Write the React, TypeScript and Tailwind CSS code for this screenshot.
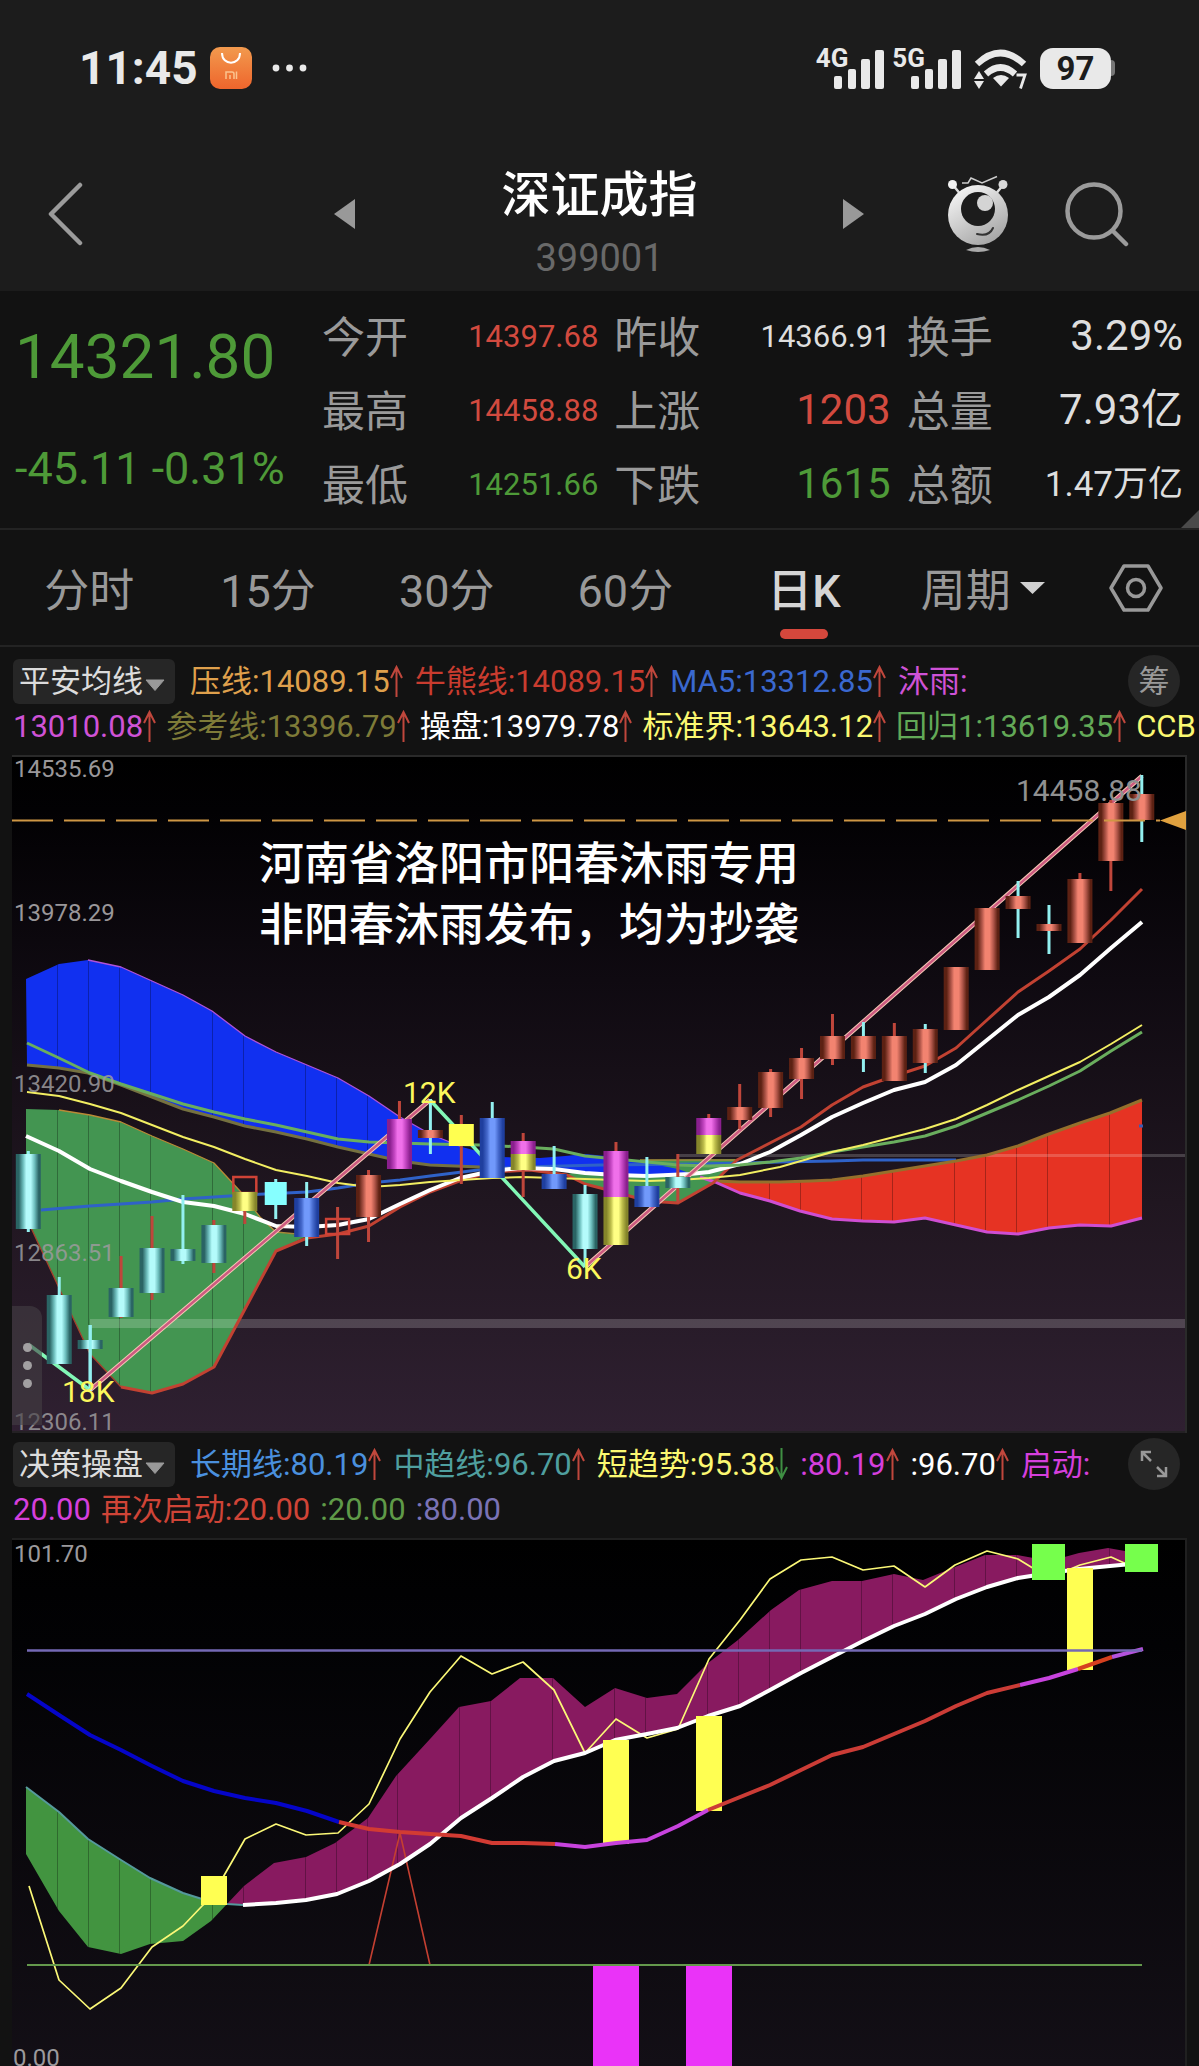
import type { ReactNode } from "react";

type Pt = [number, number];

const STEP = 30.93;
const X0 = 28.3;
const cx = (i: number) => X0 + STEP * i;
const pts = (list: Pt[]) => list.map((p) => p.join(",")).join(" ");

/* ---------- status bar ---------- */

function Signal({ label }: { label: string }) {
  return (
    <div className="flex h-[46px] items-start">
      <span className="text-[26px] leading-[26px] font-bold">{label}</span>
      <svg className="-ml-[14px] h-[46px] w-[50px]" viewBox="0 0 50 46" fill="currentColor" aria-hidden="true">
        <rect x="0" y="31" width="8" height="13" rx="2" />
        <rect x="14" y="24" width="8" height="20" rx="2" />
        <rect x="27" y="14" width="9" height="30" rx="2" />
        <rect x="41" y="5" width="9" height="39" rx="2" />
      </svg>
    </div>
  );
}

function StatusBar() {
  return (
    <div className="flex h-[136px] items-center justify-between pr-[84px] pl-[79px] text-[#e9e9e9]">
      <div className="flex items-center">
        <span className="text-[46px] leading-none font-bold">11:45</span>
        <svg className="ml-3 h-[42px] w-[42px]" viewBox="0 0 42 42" aria-label="Mi Store">
          <defs>
            <linearGradient id="mi" x1="0" y1="0" x2="0" y2="1">
              <stop offset="0" stopColor="#f29a4e" />
              <stop offset="1" stopColor="#ee652c" />
            </linearGradient>
          </defs>
          <rect width="42" height="42" rx="10" fill="url(#mi)" />
          <path d="M12 6c0 13 18 13 18 0" fill="none" stroke="#fff" strokeWidth="2" />
          <path d="M16 32v-7h6q2 0 2 2v5M20 28v4M26.500 24.500v7.500" fill="none" stroke="#fbc48f" strokeWidth="1.500" />
        </svg>
        <svg className="ml-5 h-2 w-9" viewBox="0 0 36 8" fill="currentColor" aria-hidden="true">
          <circle cx="4" cy="4" r="3.400" />
          <circle cx="17.500" cy="4" r="3.400" />
          <circle cx="31" cy="4" r="3.400" />
        </svg>
      </div>
      <div className="flex items-center">
        <Signal label="4G" />
        <div className="w-2" />
        <Signal label="5G" />
        <svg className="ml-3 h-[42px] w-[55px]" viewBox="0 0 55 42" fill="none" aria-label="Wi-Fi">
          <path d="M4 17Q27.500-5 51 17" stroke="currentColor" strokeWidth="6.500" />
          <path d="M13 27Q27.500 14 42 27" stroke="currentColor" strokeWidth="6.500" />
          <path d="M20 31Q28 25 36 31L28 39.500z" fill="currentColor" />
          <path d="M6 24l5 8H1zM6 42l5-8H1z" fill="currentColor" />
          <path d="M43.500 28H52L47.500 41.500" stroke="currentColor" strokeWidth="2.800" />
        </svg>
        <div className="ml-3 flex items-center">
          <span className="flex h-[41px] w-[71px] items-center justify-center rounded-[13px] bg-[#e9e9e9] text-[33px] leading-none font-bold text-[#1c1c1c]">
            97
          </span>
          <span className="h-4 w-1 rounded-r bg-[#777]" />
        </div>
      </div>
    </div>
  );
}

/* ---------- title bar ---------- */

function TitleBar() {
  return (
    <div className="grid h-[155px] grid-cols-[1fr_auto_1fr] items-center">
      <div className="flex items-center justify-between pl-[46px]">
        <button type="button" aria-label="返回">
          <svg className="h-[66px] w-[37px]" viewBox="0 0 37 66" fill="none" stroke="#9b9b9b" strokeWidth="4.500" strokeLinecap="round" strokeLinejoin="round">
            <path d="M34 4L5 33L34 62" />
          </svg>
        </button>
        <button type="button" aria-label="上一只">
          <svg className="h-[30px] w-[22px]" viewBox="0 0 22 30" fill="#999">
            <path d="M0 15L21 0V30z" />
          </svg>
        </button>
      </div>
      <div className="flex w-[487px] flex-col items-center pt-6">
        <h1 className="text-[49px] leading-[64px] font-medium text-white">深证成指</h1>
        <p className="text-[38px] leading-[60px] text-[#696969]">399001</p>
      </div>
      <div className="flex items-center">
        <button type="button" aria-label="下一只">
          <svg className="h-[30px] w-[22px]" viewBox="0 0 22 30" fill="#999">
            <path d="M21 15L0 0V30z" />
          </svg>
        </button>
        <button type="button" aria-label="智能助手" className="ml-[82px]">
          <svg className="h-[78px] w-[62px]" viewBox="0 0 62 78">
            <defs>
              <linearGradient id="bot" x1="0" y1="0" x2="0.600" y2="1">
                <stop offset="0" stopColor="#fff" />
                <stop offset="0.550" stopColor="#cfcfcf" />
                <stop offset="1" stopColor="#a8a8a8" />
              </linearGradient>
            </defs>
            <path d="M6 10L14 20M56 10L48 20" stroke="#ddd" strokeWidth="2.500" />
            <circle cx="5.500" cy="9.500" r="4.500" fill="#f2f2f2" />
            <circle cx="56" cy="9.500" r="4.500" fill="#d9d9d9" />
            <path d="M15 8h6l3-5 11 5L50 1.500" fill="none" stroke="#ccc" strokeWidth="1.500" />
            <circle cx="31" cy="40" r="30" fill="url(#bot)" />
            <circle cx="31" cy="34" r="17" fill="#1c1c1c" />
            <circle cx="38" cy="28" r="8" fill="#d4d4d4" />
            <path d="M30 59q12 3 16-6" fill="none" stroke="#333" strokeWidth="2" strokeLinecap="round" />
            <path d="M19 75q12-6 24 0q-12 4-24 0z" fill="#aaa" />
          </svg>
        </button>
        <button type="button" aria-label="搜索" className="ml-[56px]">
          <svg className="h-[66px] w-[64px]" viewBox="0 0 64 66" fill="none" stroke="#9b9b9b" strokeWidth="4.500" strokeLinecap="round">
            <circle cx="29" cy="30" r="26.500" />
            <path d="M48 50L61 63" />
          </svg>
        </button>
      </div>
    </div>
  );
}

/* ---------- quote ---------- */

type Quote = { label: string; value: string; tone: string };

const RED = "text-[#d24a3f]";
const GREEN = "text-[#4e9a38]";
const PLAIN = "text-[#dedede]";

const QUOTES: Quote[] = [
  { label: "今开", value: "14397.68", tone: `text-[31px] ${RED}` },
  { label: "昨收", value: "14366.91", tone: `text-[31px] ${PLAIN}` },
  { label: "换手", value: "3.29%", tone: `text-[42px] ${PLAIN}` },
  { label: "最高", value: "14458.88", tone: `text-[31px] ${RED}` },
  { label: "上涨", value: "1203", tone: `text-[42px] ${RED}` },
  { label: "总量", value: "7.93亿", tone: `text-[42px] ${PLAIN}` },
  { label: "最低", value: "14251.66", tone: `text-[31px] ${GREEN}` },
  { label: "下跌", value: "1615", tone: `text-[42px] ${GREEN}` },
  { label: "总额", value: "1.47万亿", tone: `text-[35px] ${PLAIN}` },
];

function QuotePanel() {
  return (
    <section className="relative flex h-[239px] border-b-2 border-[#232323] pr-4">
      <div className={`w-[322px] shrink-0 pl-[15px] whitespace-nowrap ${GREEN}`}>
        <p className="mt-[20px] text-[62px] leading-[92px]">14321.80</p>
        <p className="mt-[36px] text-[45px] leading-[60px]">-45.11 -0.31%</p>
      </div>
      <dl className="mt-[8px] grid h-[222px] flex-1 grid-cols-3 grid-rows-3 gap-x-4 whitespace-nowrap">
        {QUOTES.map((q) => (
          <div key={q.label} className="flex items-center justify-between leading-none">
            <dt className="pt-1 text-[43px] text-[#9a9a9a]">{q.label}</dt>
            <dd className={q.tone}>{q.value}</dd>
          </div>
        ))}
      </dl>
      <svg className="absolute right-0 bottom-0 h-[18px] w-[18px]" viewBox="0 0 18 18" fill="#4a4a4a" aria-hidden="true">
        <path d="M18 0V18H0z" />
      </svg>
    </section>
  );
}

/* ---------- period tabs ---------- */

function Tabs() {
  return (
    <nav className="flex h-[117px] items-stretch border-b-2 border-[#232323] text-[45px] leading-none text-[#999]">
      {["分时", "15分", "30分", "60分", "日K"].map((t) => (
        <button
          key={t}
          type="button"
          aria-pressed={t === "日K"}
          className={
            t === "日K"
              ? "relative flex flex-1 items-center justify-center pt-2 font-medium text-[#d5d5d5]"
              : "relative flex flex-1 items-center justify-center pt-2"
          }
        >
          {t}
          {t === "日K" && <span className="absolute bottom-[6px] h-[10px] w-12 rounded-full bg-[#d5473c]" />}
        </button>
      ))}
      <label className="flex flex-1 items-center justify-center gap-2">
        <select aria-label="周期" className="appearance-none bg-transparent pt-2 leading-[60px] outline-none">
          <option>周期</option>
        </select>
        <svg className="pointer-events-none h-3 w-[25px]" viewBox="0 0 25 12" fill="#d0d0d0" aria-hidden="true">
          <path d="M0 0H25L12.500 12z" />
        </svg>
      </label>
      <button type="button" aria-label="设置" className="flex w-[127px] items-center justify-center">
        <svg className="h-[50px] w-[54px]" viewBox="0 0 54 50" fill="none" stroke="#999" strokeWidth="3.500" strokeLinejoin="round">
          <path d="M15 3H39L52 25L39 47H15L2 25z" />
          <circle cx="27" cy="25" r="8.500" />
        </svg>
      </button>
    </nav>
  );
}

/* ---------- indicator legends ---------- */

type Item = { text: string; color: string; dir?: "up" | "down" };

function Arrow({ dir }: { dir: "up" | "down" }) {
  return dir === "up" ? (
    <svg className="h-[32px] w-[13px] shrink-0" viewBox="0 0 13 32" fill="none" stroke="#c0473c" strokeWidth="2" aria-label="上升">
      <path d="M6.500 32V2M1 13L6.500 2L12 13" />
    </svg>
  ) : (
    <svg className="h-[32px] w-[13px] shrink-0" viewBox="0 0 13 32" fill="none" stroke="#3f8f43" strokeWidth="2" aria-label="下降">
      <path d="M6.500 0V30M1 19L6.500 30L12 19" />
    </svg>
  );
}

function Items({ items }: { items: Item[] }) {
  return (
    <>
      {items.map((it) => (
        <span key={it.text} className={`flex shrink-0 items-center whitespace-nowrap ${it.color}`}>
          {it.text}
          {it.dir && <Arrow dir={it.dir} />}
        </span>
      ))}
    </>
  );
}

function Legend({ name, first, second, action }: { name: string; first: Item[]; second: Item[]; action: ReactNode }) {
  return (
    <div className="text-[31px] leading-[45px]">
      <div className="flex h-[46px] items-center gap-3 pr-[19px] pl-[13px]">
        <label className="mr-[3px] flex h-[45px] w-[162px] shrink-0 items-center gap-[2px] rounded-md bg-[#262626] pl-[6px]">
          <select aria-label="指标" className="appearance-none bg-transparent text-[#dcdcdc] outline-none">
            <option>{name}</option>
          </select>
          <svg className="pointer-events-none mt-2 h-3 w-5" viewBox="0 0 20 12" fill="#999" stroke="#999" strokeLinejoin="round" aria-hidden="true">
            <path d="M1 1H19L10 11.500z" />
          </svg>
        </label>
        <Items items={first} />
        <div className="ml-auto">{action}</div>
      </div>
      <div className="flex h-[44px] items-center gap-[10px] overflow-hidden pl-[13px]">
        <Items items={second} />
      </div>
    </div>
  );
}

const ROUND = "flex h-[52px] w-[52px] items-center justify-center rounded-full bg-[#262626] text-[#999]";

/* ---------- candlestick chart ---------- */

const OLIVE: Pt[] = [
  [27, 1065], [59, 1068], [88, 1073], [121, 1085], [152, 1097], [183, 1109], [214, 1117], [245, 1126], [276, 1132],
  [307, 1139], [338, 1147], [369, 1154], [400, 1161], [430, 1165], [480, 1167],
];
const OLIVE_R: Pt[] = [
  [715, 1181], [740, 1182], [780, 1182], [811, 1181], [832, 1180], [863, 1176], [894, 1171], [925, 1166], [956, 1161],
  [987, 1155], [1018, 1146], [1049, 1134], [1080, 1123], [1110, 1113], [1142, 1100],
];
const BLUE_TOP: Pt[] = [
  [26, 979], [59, 964], [88, 960], [121, 967], [152, 981], [183, 995], [212, 1011], [245, 1036], [276, 1052],
  [307, 1065], [338, 1078], [369, 1096], [400, 1117], [430, 1134], [462, 1147], [500, 1157], [540, 1158], [565, 1156],
  [585, 1154], [616, 1157], [647, 1163], [678, 1169], [692, 1174],
];
const BLUE_AREA: Pt[] = [...BLUE_TOP, [650, 1175], [600, 1174], [540, 1168], ...[...OLIVE].reverse()];
const GREEN_AREA: Pt[] = [
  [26, 1109], [59, 1110], [90, 1115], [121, 1122], [152, 1136], [183, 1149], [214, 1163], [240, 1191], [260, 1217],
  [276, 1232], [307, 1236], [276, 1251], [245, 1309], [214, 1367], [183, 1384], [152, 1393], [121, 1387], [90, 1354],
  [59, 1288], [32, 1230], [26, 1217],
];
const GREEN_AREA2: Pt[] = [
  [567, 1174], [585, 1184], [616, 1192], [647, 1201], [678, 1202], [713, 1183], [737, 1159], [640, 1160],
];
const PURPLE_LOW: Pt[] = [
  [700, 1177], [715, 1182], [740, 1193], [770, 1201], [800, 1211], [832, 1219], [863, 1221], [894, 1222], [925, 1218],
  [956, 1225], [987, 1232], [1018, 1234], [1049, 1228], [1080, 1225], [1111, 1226], [1142, 1218],
];
const RED_AREA: Pt[] = [...OLIVE_R, ...[...PURPLE_LOW].reverse()];
const RED_LINE: Pt[] = [
  [121, 1387], [152, 1393], [183, 1384], [214, 1367], [245, 1309], [276, 1251], [307, 1238], [338, 1234], [369, 1226],
  [400, 1207], [430, 1192], [462, 1180], [492, 1172], [530, 1170], [567, 1175], [585, 1184], [616, 1192], [647, 1201],
  [678, 1203], [713, 1183], [737, 1160], [770, 1143], [801, 1127], [832, 1105], [863, 1087], [894, 1076], [925, 1066],
  [956, 1048], [987, 1020], [1018, 992], [1049, 971], [1080, 949], [1111, 920], [1142, 889],
];
const WHITE_LINE: Pt[] = [
  [26, 1136], [59, 1151], [90, 1169], [121, 1181], [152, 1192], [183, 1202], [214, 1206], [245, 1214], [276, 1226],
  [307, 1227], [338, 1225], [369, 1219], [400, 1204], [430, 1190], [460, 1178], [492, 1171], [520, 1168], [554, 1169],
  [585, 1173], [616, 1175], [647, 1176], [690, 1174], [709, 1172], [740, 1164], [770, 1152], [801, 1135], [832, 1117],
  [863, 1103], [894, 1090], [925, 1082], [956, 1065], [987, 1040], [1018, 1015], [1049, 997], [1080, 975],
  [1111, 948], [1142, 922],
];
const GREEN_LINE: Pt[] = [
  [27, 1043], [59, 1058], [90, 1073], [121, 1084], [152, 1094], [183, 1104], [214, 1112], [245, 1119], [276, 1125],
  [307, 1132], [338, 1139], [369, 1142], [400, 1143], [430, 1144], [480, 1145], [523, 1147], [554, 1149], [585, 1156],
  [616, 1159], [647, 1162], [678, 1165], [709, 1166], [740, 1165], [770, 1162], [801, 1158], [832, 1152],
  [863, 1147], [894, 1142], [925, 1136], [956, 1126], [987, 1113], [1018, 1100], [1049, 1086], [1080, 1071],
  [1111, 1051], [1142, 1032],
];
const YELLOW_LINE: Pt[] = [
  [27, 1092], [59, 1096], [90, 1104], [121, 1113], [152, 1125], [183, 1137], [214, 1147], [245, 1159], [276, 1170],
  [307, 1176], [338, 1183], [369, 1187], [400, 1185], [430, 1182], [461, 1180], [492, 1178], [523, 1177], [554, 1178],
  [616, 1180], [647, 1181], [678, 1180], [709, 1178], [740, 1175], [780, 1167], [832, 1152], [863, 1145], [894, 1137],
  [925, 1129], [956, 1119], [987, 1105], [1018, 1090], [1049, 1076], [1080, 1062], [1111, 1044], [1142, 1025],
];
const BLUE_LINE: Pt[] = [
  [41, 1210], [90, 1206], [152, 1202], [183, 1199], [245, 1195], [307, 1192], [338, 1188], [369, 1183], [400, 1180],
  [430, 1176], [478, 1170], [523, 1167], [600, 1165], [700, 1164], [780, 1162], [832, 1161], [863, 1160], [956, 1160],
];

type Fill = "teal" | "salmon" | "blue" | "magenta" | "yellow" | "flatYellow" | "cyan" | "hollow";
type Body = [Fill, number, number];
type Candle = { i: number; wick?: ["c" | "r", number, number]; bodies: Body[] };

const CANDLES: Candle[] = [
  { i: 0, wick: ["c", 1151, 1232], bodies: [["teal", 1154, 1229]] },
  { i: 1, wick: ["c", 1277, 1364], bodies: [["teal", 1295, 1364]] },
  { i: 2, wick: ["c", 1325, 1391], bodies: [["teal", 1340, 1349]] },
  { i: 3, wick: ["r", 1256, 1318], bodies: [["teal", 1288, 1317]] },
  { i: 4, wick: ["r", 1216, 1300], bodies: [["teal", 1248, 1293]] },
  { i: 5, wick: ["c", 1195, 1264], bodies: [["teal", 1249, 1261]] },
  { i: 6, wick: ["r", 1220, 1273], bodies: [["teal", 1225, 1263]] },
  { i: 7, wick: ["r", 1211, 1224], bodies: [["hollow", 1176, 1194], ["yellow", 1192, 1211]] },
  { i: 8, wick: ["c", 1179, 1219], bodies: [["cyan", 1182, 1205]] },
  { i: 9, wick: ["c", 1182, 1246], bodies: [["blue", 1198, 1237]] },
  { i: 10, wick: ["r", 1207, 1259], bodies: [["hollow", 1218, 1235]] },
  { i: 11, wick: ["r", 1170, 1242], bodies: [["salmon", 1175, 1217]] },
  { i: 12, wick: ["r", 1101, 1130], bodies: [["magenta", 1119, 1169]] },
  { i: 13, wick: ["c", 1099, 1154], bodies: [["salmon", 1130, 1138]] },
  { i: 14, wick: ["r", 1115, 1184], bodies: [["flatYellow", 1124, 1146]] },
  { i: 15, wick: ["c", 1102, 1120], bodies: [["blue", 1118, 1178]] },
  { i: 16, wick: ["r", 1133, 1197], bodies: [["magenta", 1141, 1154], ["yellow", 1154, 1170]] },
  { i: 17, wick: ["c", 1146, 1175], bodies: [["blue", 1174, 1189]] },
  { i: 18, wick: ["c", 1185, 1267], bodies: [["teal", 1194, 1249]] },
  { i: 19, wick: ["r", 1142, 1155], bodies: [["magenta", 1151, 1197], ["yellow", 1197, 1245]] },
  { i: 20, wick: ["c", 1157, 1190], bodies: [["blue", 1186, 1207]] },
  { i: 21, wick: ["r", 1154, 1203], bodies: [["teal", 1177, 1188]] },
  { i: 22, wick: ["r", 1114, 1120], bodies: [["magenta", 1118, 1135], ["yellow", 1135, 1154]] },
  { i: 23, wick: ["r", 1084, 1129], bodies: [["salmon", 1107, 1120]] },
  { i: 24, wick: ["r", 1069, 1117], bodies: [["salmon", 1072, 1108]] },
  { i: 25, wick: ["r", 1048, 1099], bodies: [["salmon", 1058, 1079]] },
  { i: 26, wick: ["r", 1014, 1065], bodies: [["salmon", 1036, 1059]] },
  { i: 27, wick: ["c", 1022, 1072], bodies: [["salmon", 1036, 1059]] },
  { i: 28, wick: ["r", 1023, 1040], bodies: [["salmon", 1036, 1081]] },
  { i: 29, wick: ["c", 1024, 1073], bodies: [["salmon", 1029, 1063]] },
  { i: 30, bodies: [["salmon", 967, 1030]] },
  { i: 31, bodies: [["salmon", 908, 970]] },
  { i: 32, wick: ["c", 881, 938], bodies: [["salmon", 896, 909]] },
  { i: 33, wick: ["c", 905, 954], bodies: [["salmon", 924, 931]] },
  { i: 34, wick: ["r", 873, 885], bodies: [["salmon", 879, 943]] },
  { i: 35, wick: ["r", 800, 891], bodies: [["salmon", 803, 861]] },
  { i: 36, wick: ["c", 775, 842], bodies: [["salmon", 794, 820]] },
];

const SHADES: { id: string; edge: string; mid: string; core: string }[] = [
  { id: "teal", edge: "#2a6464", mid: "#6fc0bf", core: "#b4fbfb" },
  { id: "salmon", edge: "#5c2113", mid: "#b2574a", core: "#f28370" },
  { id: "blue", edge: "#1f3f9f", mid: "#4569cc", core: "#7199fb" },
  { id: "magenta", edge: "#8a1f8e", mid: "#c446c2", core: "#f070ea" },
  { id: "yellow", edge: "#85852a", mid: "#bfbf4c", core: "#ffff84" },
];

const FLAT: Record<string, string> = { flatYellow: "#ffff50", cyan: "#86ffff" };

function CandleMark({ c }: { c: Candle }) {
  const x = cx(c.i);
  return (
    <g>
      {c.wick && (
        <rect x={x - 1.5} y={c.wick[1]} width="3" height={c.wick[2] - c.wick[1]} fill={c.wick[0] === "c" ? "#93f0f0" : "#bf463b"} />
      )}
      {c.bodies.map(([fill, top, bottom]) => {
        if (fill === "hollow") {
          return (
            <rect key={top} x={x - 11.5} y={top + 1} width="23" height={bottom - top - 2} fill="none" stroke="#cf4337" strokeWidth="2.500" />
          );
        }
        const w = fill === "cyan" ? 22 : 25;
        return (
          <rect key={top} x={x - w / 2} y={top} width={w} height={bottom - top} fill={FLAT[fill] ?? `url(#c-${fill})`} />
        );
      })}
      {c.i === 2 && <rect x={x - 1.5} y={1325} width="3" height="66" fill="#93f0f0" />}
    </g>
  );
}

function Stripes({ clip, at, y1, y2 }: { clip: string; at: number[]; y1: number; y2: number }) {
  return (
    <g clipPath={`url(#${clip})`} stroke="#000" strokeOpacity="0.280">
      {at.map((i) => (
        <path key={i} d={`M${Math.round(cx(i)) - 2 + 0.5} ${y1}V${y2}`} />
      ))}
    </g>
  );
}

function CandleChart() {
  return (
    <div className="relative mx-3 border-t-2 border-r-2 border-[#2a2a2a]">
      <svg className="block w-full overflow-visible" viewBox="12 757 1173 676" role="img" aria-label="日K线图">
        <defs>
          <linearGradient id="bg1" x1="0" y1="0" x2="0" y2="1">
            <stop offset="0" stopColor="#000" />
            <stop offset="0.080" stopColor="#020103" />
            <stop offset="0.330" stopColor="#0f0a11" />
            <stop offset="0.660" stopColor="#201620" />
            <stop offset="1" stopColor="#2f2031" />
          </linearGradient>
          {SHADES.map((s) => (
            <linearGradient key={s.id} id={`c-${s.id}`}>
              <stop offset="0" stopColor={s.edge} />
              <stop offset="0.120" stopColor={s.edge} />
              <stop offset="0.300" stopColor={s.mid} />
              <stop offset="0.420" stopColor={s.core} />
              <stop offset="0.600" stopColor={s.core} />
              <stop offset="0.750" stopColor={s.mid} />
              <stop offset="0.920" stopColor={s.edge} />
            </linearGradient>
          ))}
          <clipPath id="k-blue"><polygon points={pts(BLUE_AREA)} /></clipPath>
          <clipPath id="k-green"><polygon points={pts(GREEN_AREA)} /></clipPath>
          <clipPath id="k-red"><polygon points={pts(RED_AREA)} /></clipPath>
        </defs>
        <rect x="12" y="757" width="1173" height="674" fill="url(#bg1)" />
        <rect x="12" y="1431" width="1173" height="2" fill="#242124" />

        <g fontSize="24" fill="#9a979a">
          <text x="14" y="777">14535.69</text>
          <text x="14" y="921">13978.29</text>
        </g>

        <polygon points={pts(GREEN_AREA)} fill="#439551" />
        <polygon points={pts(GREEN_AREA2)} fill="#439551" />
        <polygon points={pts(BLUE_AREA)} fill="#1130f0" />
        <polygon points={pts(RED_AREA)} fill="#e63323" />
        <Stripes clip="k-blue" at={[1, 2, 3, 4, 6, 7, 9, 10, 11]} y1={950} y2={1180} />
        <Stripes clip="k-green" at={[1, 2, 3, 4, 6, 7]} y1={1100} y2={1400} />
        <Stripes clip="k-red" at={[24, 25, 27, 28, 30, 31, 32, 33, 35]} y1={1090} y2={1240} />

        <rect x="90" y="1319" width="1095" height="9" fill="#fff" fillOpacity="0.190" />
        <rect x="678" y="1154" width="507" height="3" fill="#fff" fillOpacity="0.190" />

        <g fill="none" strokeLinejoin="round">
          <polyline points={pts(BLUE_TOP.slice(2, 15))} stroke="#b052d8" strokeWidth="1.300" />
          <polyline points={pts(GREEN_AREA.slice(1, 10))} stroke="#b98a36" strokeWidth="1.300" />
          <path d="M276 1232L307 1235M640 1160H735" stroke="#a58b38" strokeWidth="1.500" />
          <polyline points={pts(GREEN_AREA.slice(16))} stroke="#a5402c" strokeWidth="1.300" />
          <polyline points={pts(BLUE_LINE)} stroke="#2f62c8" strokeWidth="3" />
          <path d="M1139 1126H1143" stroke="#3a5bb5" strokeWidth="3" />
          <polyline points={pts(OLIVE)} stroke="#757140" strokeWidth="3" />
          <polyline points={pts(OLIVE_R)} stroke="#95702c" strokeWidth="3" />
          <polyline points={pts(PURPLE_LOW)} stroke="#cf4ed2" strokeWidth="3" />
          <polyline points={pts(RED_LINE)} stroke="#c24232" strokeWidth="3" />
          <polyline points={pts(WHITE_LINE)} stroke="#fff" strokeWidth="4" />
          <polyline points={pts(GREEN_LINE)} stroke="#6aae5e" strokeWidth="3" />
          <polyline points={pts(YELLOW_LINE)} stroke="#f2ee62" strokeWidth="2" />
          <path d="M28 1344L90 1390M430 1100L585 1267" stroke="#82f7b6" strokeWidth="3.500" />
          <path d="M90 1390L430 1100M585 1267L1142 776" stroke="#f6c8b4" strokeWidth="4.500" />
          <path d="M90 1390L430 1100M585 1267L1142 776" stroke="#cc5a80" strokeWidth="2.500" />
        </g>

        {CANDLES.map((c) => <CandleMark key={c.i} c={c} />)}

        <path d="M12 820.500H1160" stroke="#cf9745" strokeWidth="2" strokeDasharray="41 11" />
        <path d="M1160 820.500L1186 811V830z" fill="#e0a13f" />

        <g fontSize="24" fill="#9d9b9e" fillOpacity="0.850">
          <text x="14" y="1092">13420.90</text>
          <text x="14" y="1261">12863.51</text>
          <text x="14" y="1430">12306.11</text>
        </g>
        <text x="1016" y="801" fontSize="30" fill="#909090">14458.88</text>
        <g fontSize="30" fill="#fbf75c">
          <text x="62" y="1402">18K</text>
          <text x="403" y="1103">12K</text>
          <text x="566" y="1279">6K</text>
        </g>
        <g fontSize="45" fontWeight="500" fill="#fff">
          <text x="259" y="880">河南省洛阳市阳春沐雨专用</text>
          <text x="259" y="941">非阳春沐雨发布，均为抄袭</text>
        </g>
      </svg>
      <button
        type="button"
        aria-label="更多"
        className="absolute bottom-2 left-0 flex h-[119px] w-[30px] flex-col items-center justify-center gap-[9px] rounded-tr-xl bg-[#454045]/60"
      >
        <span className="h-[9px] w-[9px] rounded-full bg-[#a2a0a2]" />
        <span className="h-[9px] w-[9px] rounded-full bg-[#a2a0a2]" />
        <span className="h-[9px] w-[9px] rounded-full bg-[#a2a0a2]" />
      </button>
    </div>
  );
}

/* ---------- oscillator chart ---------- */

const OSC_GREEN_TOP: Pt[] = [[26, 1787], [59, 1812], [88, 1839], [121, 1860], [150, 1878], [183, 1893], [202, 1899], [227, 1904]];
const OSC_GREEN: Pt[] = [
  ...OSC_GREEN_TOP, [211, 1921], [183, 1941], [150, 1944], [121, 1954], [88, 1947], [59, 1911], [26, 1854],
];
const OSC_WHITE: Pt[] = [
  [243, 1905], [276, 1903], [306, 1900], [337, 1894], [369, 1881], [400, 1864], [430, 1844], [461, 1818], [492, 1798],
  [523, 1777], [554, 1761], [585, 1753], [615, 1740], [647, 1734], [677, 1728], [708, 1716], [740, 1706],
  [770, 1690], [801, 1673], [832, 1657], [863, 1641], [894, 1626], [925, 1614], [956, 1599], [987, 1587],
  [1018, 1578], [1050, 1573], [1079, 1569], [1110, 1566], [1142, 1563],
];
const OSC_TOP: Pt[] = [
  [227, 1904], [244, 1886], [274, 1863], [306, 1857], [335, 1843], [368, 1818], [396, 1776], [430, 1739], [459, 1707],
  [491, 1701], [520, 1678], [553, 1678], [585, 1707], [615, 1688], [647, 1698], [677, 1694], [708, 1663], [738, 1640],
  [771, 1610], [799, 1590], [832, 1581], [862, 1581], [894, 1574], [923, 1580], [955, 1567], [985, 1555],
  [1017, 1555], [1050, 1561], [1079, 1553], [1108, 1548], [1142, 1554],
];
const OSC_AREA: Pt[] = [...OSC_TOP, ...[...OSC_WHITE].reverse()];
const OSC_YELLOW: Pt[] = [
  [29, 1886], [59, 1980], [90, 2009], [121, 1988], [152, 1947], [183, 1926], [203, 1905], [214, 1895], [222, 1879],
  [245, 1839], [276, 1824], [306, 1835], [338, 1833], [369, 1804], [400, 1739], [430, 1692], [461, 1656], [492, 1674],
  [523, 1662], [554, 1690], [585, 1753], [616, 1719], [647, 1738], [678, 1729], [709, 1659], [740, 1620], [770, 1579],
  [801, 1560], [832, 1557], [863, 1570], [894, 1566], [925, 1587], [955, 1565], [987, 1551], [1018, 1559],
  [1049, 1578], [1080, 1565], [1111, 1557], [1142, 1571],
];
const LONG: { color: string; list: Pt[] }[] = [
  {
    color: "#0505c8",
    list: [[27, 1694], [59, 1715], [90, 1735], [121, 1750], [152, 1766], [183, 1781], [214, 1791], [245, 1798], [276, 1803], [307, 1811], [339, 1822]],
  },
  { color: "#d23b33", list: [[339, 1822], [369, 1829], [400, 1832], [461, 1836], [492, 1843], [523, 1843], [555, 1844]] },
  { color: "#c743dd", list: [[555, 1844], [585, 1847], [616, 1843], [647, 1840], [678, 1826], [708, 1810]] },
  {
    color: "#cb3c36",
    list: [[708, 1810], [770, 1785], [801, 1770], [832, 1755], [863, 1747], [894, 1734], [925, 1721], [956, 1706], [987, 1693], [1020, 1685]],
  },
  { color: "#c743dd", list: [[1020, 1685], [1049, 1678], [1078, 1669]] },
  { color: "#d5401f", list: [[1078, 1669], [1112, 1657]] },
  { color: "#b352dc", list: [[1112, 1657], [1143, 1649]] },
];

function OscillatorChart() {
  return (
    <div className="mx-3 border-t-2 border-r-2 border-[#202020]">
      <svg className="block w-full overflow-visible" viewBox="12 1540 1173 526" role="img" aria-label="决策操盘指标图">
        <defs>
          <linearGradient id="bg2" x1="0" y1="0" x2="0" y2="1">
            <stop offset="0" stopColor="#000" />
            <stop offset="0.200" stopColor="#020204" />
            <stop offset="1" stopColor="#130f16" />
          </linearGradient>
          <clipPath id="o-green"><polygon points={pts(OSC_GREEN)} /></clipPath>
          <clipPath id="o-plum"><polygon points={pts(OSC_AREA)} /></clipPath>
        </defs>
        <rect x="12" y="1540" width="1173" height="526" fill="url(#bg2)" />
        <polygon points={pts(OSC_GREEN)} fill="#429440" />
        <Stripes clip="o-green" at={[1, 2, 3, 4, 6]} y1={1780} y2={1960} />
        <polygon points={pts(OSC_AREA)} fill="#881a60" />
        <Stripes clip="o-plum" at={[7, 9, 10, 11, 12, 14, 15, 17, 19, 20, 22, 23, 24, 25, 27, 28, 30, 31, 32, 35]} y1={1540} y2={1910} />

        <g fill="none" strokeLinejoin="round">
          <polyline points={pts([...OSC_GREEN_TOP, [243, 1905]])} stroke="#55999c" strokeWidth="2" />
          <path d="M369 1965L400 1833L430 1965" stroke="#c43f31" strokeWidth="1.600" />
          <polyline points={pts(OSC_YELLOW)} stroke="#fbf877" strokeWidth="1.700" />
          <polyline points={pts(OSC_WHITE)} stroke="#fff" strokeWidth="4" />
        </g>

        <g fill="#ffff52">
          <rect x="201" y="1876" width="26" height="29" />
          <rect x="603" y="1740" width="26" height="104" />
          <rect x="696" y="1716" width="26" height="95" />
          <rect x="1067" y="1568" width="26" height="102" />
        </g>
        <g fill="#76ff4c">
          <rect x="1032" y="1544" width="33" height="36" />
          <rect x="1125" y="1544" width="33" height="28" />
        </g>
        <g fill="#ea33f8">
          <rect x="593" y="1965" width="46" height="101" />
          <rect x="686" y="1965" width="46" height="101" />
        </g>
        {LONG.map((s) => (
          <polyline key={s.list[0][0]} points={pts(s.list)} fill="none" stroke={s.color} strokeWidth="4" strokeLinejoin="round" />
        ))}
        <path d="M27 1650.500H1142" stroke="#7469b4" strokeWidth="2.500" />
        <path d="M27 1965H1142" stroke="#64984c" strokeWidth="2" />
        <g fontSize="24" fill="#9b999c">
          <text x="14" y="1562">101.70</text>
          <text x="13" y="2066">0.00</text>
        </g>
      </svg>
    </div>
  );
}

export default function App() {
  return (
    <main className="overflow-hidden bg-[#121212] font-['Roboto','Noto_Sans_CJK_SC',sans-serif]">
      <header className="bg-[#1c1c1c]">
        <StatusBar />
        <TitleBar />
      </header>
      <QuotePanel />
      <Tabs />
      <section className="pt-2">
        <div className="pt-[3px] pb-[7px]">
          <Legend
            name="平安均线"
            first={[
              { text: "压线:14089.15", color: "text-[#dfa04c]", dir: "up" },
              { text: "牛熊线:14089.15", color: "text-[#c93c2f]", dir: "up" },
              { text: "MA5:13312.85", color: "text-[#3a68cf]", dir: "up" },
              { text: "沐雨:", color: "text-[#cf52d6]" },
            ]}
            second={[
              { text: "13010.08", color: "text-[#cf52d6]", dir: "up" },
              { text: "参考线:13396.79", color: "text-[#7e7b38]", dir: "up" },
              { text: "操盘:13979.78", color: "text-white", dir: "up" },
              { text: "标准界:13643.12", color: "text-[#fbf871]", dir: "up" },
              { text: "回归1:13619.35", color: "text-[#62a957]", dir: "up" },
              { text: "CCB", color: "text-[#fbf871]" },
            ]}
            action={<button type="button" className={ROUND}>筹</button>}
          />
        </div>
        <CandleChart />
      </section>
      <section>
        <div className="pt-2 pb-[7px]">
          <Legend
            name="决策操盘"
            first={[
              { text: "长期线:80.19", color: "text-[#4a90de]", dir: "up" },
              { text: "中趋线:96.70", color: "text-[#4f9f9f]", dir: "up" },
              { text: "短趋势:95.38", color: "text-[#fbf871]", dir: "down" },
              { text: ":80.19", color: "text-[#d53fdc]", dir: "up" },
              { text: ":96.70", color: "text-white", dir: "up" },
              { text: "启动:", color: "text-[#d53fdc]" },
            ]}
            second={[
              { text: "20.00", color: "text-[#d53fdc]" },
              { text: "再次启动:20.00", color: "text-[#cf4437]" },
              { text: ":20.00", color: "text-[#5f9a48]" },
              { text: ":80.00", color: "text-[#7a72b5]" },
            ]}
            action={
              <button type="button" aria-label="放大" className={ROUND}>
                <svg className="h-7 w-7" viewBox="0 0 28 28" fill="none" stroke="currentColor" strokeWidth="2.500">
                  <path d="M2 11V2H11M2 2L11 11M26 17V26H17M26 26L17 17" />
                </svg>
              </button>
            }
          />
        </div>
        <OscillatorChart />
      </section>
    </main>
  );
}
